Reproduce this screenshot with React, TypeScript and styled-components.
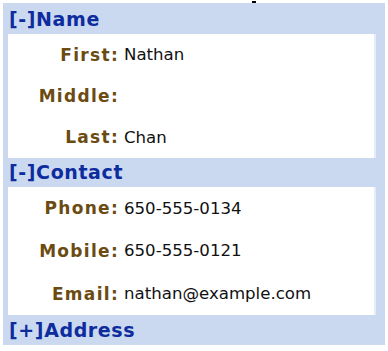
import React from 'react';
import styled, { createGlobalStyle } from 'styled-components';

interface Field {
  label: string;
  value?: string;
}

interface Section {
  title: string;
  open: boolean;
  rows: Field[];
  headHeight: number;
  rowHeight: number;
}

const sections: Section[] = [
  {
    title: 'Name',
    open: true,
    headHeight: 30,
    rowHeight: 41.3,
    rows: [
      { label: 'First:', value: 'Nathan' },
      { label: 'Middle:' },
      { label: 'Last:', value: 'Chan' },
    ],
  },
  {
    title: 'Contact',
    open: true,
    headHeight: 29,
    rowHeight: 42.7,
    rows: [
      { label: 'Phone:', value: '650-555-0134' },
      { label: 'Mobile:', value: '650-555-0121' },
      { label: 'Email:', value: 'nathan@example.com' },
    ],
  },
  { title: 'Address', open: false, headHeight: 30, rowHeight: 0, rows: [] },
];

const Global = createGlobalStyle`
  body {
    margin: 0;
    background: #ffffff;
    font-family: "DejaVu Sans", Verdana, sans-serif;
  }
`;

const Page = styled.div`
  position: relative;
  padding: 3px 3px 6px 3px;
  width: 388px;
  box-sizing: border-box;
`;

const Dot = styled.div`
  position: absolute;
  left: 252px;
  top: 1px;
  width: 4px;
  height: 2px;
  background: #000;
`;

const Frame = styled.div`
  background: #cbd9f0;
  width: 382px;
  padding-top: 1px;
`;

const Head = styled.div<{ $h: number }>`
  height: ${(p) => p.$h}px;
  display: flex;
  align-items: center;
  padding-left: 6px;
  font-size: 19px;
  font-weight: bold;
  letter-spacing: 0.6px;
  color: #0d2c9e;
`;

const Panel = styled.div`
  background: #ffffff;
  margin: 0 9px 0 5px;
  border-right: 2px solid #e4ecf8;
`;

const Row = styled.div<{ $h: number }>`
  height: ${(p) => p.$h}px;
  display: flex;
  align-items: center;
`;

const Label = styled.div`
  width: 111px;
  text-align: right;
  font-size: 17px;
  font-weight: bold;
  letter-spacing: 1.3px;
  color: #6b4b12;
  margin-right: 5px;
`;

const Value = styled.div`
  font-size: 16.6px;
  color: #111111;
`;

export default function App() {
  return (
    <Page>
      <Global />
      <Dot />
      <Frame>
        {sections.map((s) => (
          <React.Fragment key={s.title}>
            <Head $h={s.headHeight}>
              [{s.open ? '-' : '+'}]{s.title}
            </Head>
            {s.open && (
              <Panel>
                {s.rows.map((r) => (
                  <Row key={r.label} $h={s.rowHeight}>
                    <Label>{r.label}</Label>
                    <Value>{r.value}</Value>
                  </Row>
                ))}
              </Panel>
            )}
          </React.Fragment>
        ))}
      </Frame>
    </Page>
  );
}
